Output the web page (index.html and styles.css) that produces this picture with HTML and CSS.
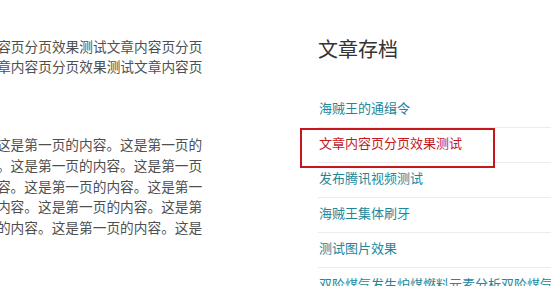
FILE: index.html
```html
<!DOCTYPE html>
<html lang="zh-CN">
<head>
<meta charset="utf-8">
<title>文章内容页分页效果测试</title>
<link rel="stylesheet" href="styles.css">
</head>
<body>
<div class="page">
  <main class="main">
    <h1 class="entry-title">
      <span class="tline">容页分页效果测试文章内容页分页</span>
      <span class="tline">章内容页分页效果测试文章内容页</span>
    </h1>
    <p class="entry-content">这是第一页的内容。这是第一页的内容。这是第一页的内容。这是第一页的内容。这是第一页的内容。这是第一页的内容。这是第一页的内容。这是第一页的内容。这是第一页的内容。这是第一页的内容。这是第一页的内容。这是第一页的内容。这是第一页的内容。这是第一页的内容。这是</p>
  </main>
  <aside class="sidebar">
    <h3 class="widget-title">文章存档</h3>
    <ul class="archive">
      <li><a href="#">海贼王的通缉令</a></li>
      <li class="current"><a href="#">文章内容页分页效果测试</a><span class="mark"></span></li>
      <li><a href="#">发布腾讯视频测试</a></li>
      <li><a href="#">海贼王集体刷牙</a></li>
      <li><a href="#">测试图片效果</a></li>
      <li><a href="#">双阶煤气发生炉煤燃料元素分析双阶煤气发生炉</a></li>
    </ul>
  </aside>
</div>
</body>
</html>
```

FILE: styles.css
```css
html, body {
  margin: 0;
  padding: 0;
  background: #fff;
  overflow: hidden;
}
body {
  width: 551px;
  height: 286px;
  font-family: "Noto Sans CJK SC", "Noto Sans", sans-serif;
}
.page {
  display: flex;
  align-items: flex-start;
}
.main {
  flex: none;
  width: 356.2px;
  margin-left: -153.7px;
  padding-top: 36px;
  color: #4f4f4f;
}
.entry-title {
  margin: 0;
  font-size: 13.7px;
  font-weight: normal;
  line-height: 20px;
  text-align: right;
}
.tline {
  display: block;
  white-space: nowrap;
}
.entry-content {
  margin: 58px 0 0;
  width: 360px;
  font-size: 13.7px;
  line-height: 20.75px;
  text-indent: 27.4px;
}
.sidebar {
  flex: none;
  width: 262px;
  margin-left: 115.5px;
  padding-top: 35px;
}
.widget-title {
  margin: 0 0 30px;
  font-size: 20px;
  font-weight: normal;
  line-height: 28px;
  color: #333;
}
.archive {
  list-style: none;
  margin: 0;
  padding: 0;
}
.archive li {
  position: relative;
  padding: 5px 0 9px 1px;
  line-height: 20px;
  font-size: 13px;
  border-bottom: 1px solid #ececec;
  white-space: nowrap;
}
.archive li:last-child {
  padding-top: 6px;
}
.archive a {
  color: #21879b;
  text-decoration: none;
}
.archive li.current a {
  color: #c41a1f;
}
.mark {
  position: absolute;
  top: 0;
  left: -18px;
  width: 195px;
  height: 40px;
  box-sizing: border-box;
  border: 2px solid #c8161d;
}
```
